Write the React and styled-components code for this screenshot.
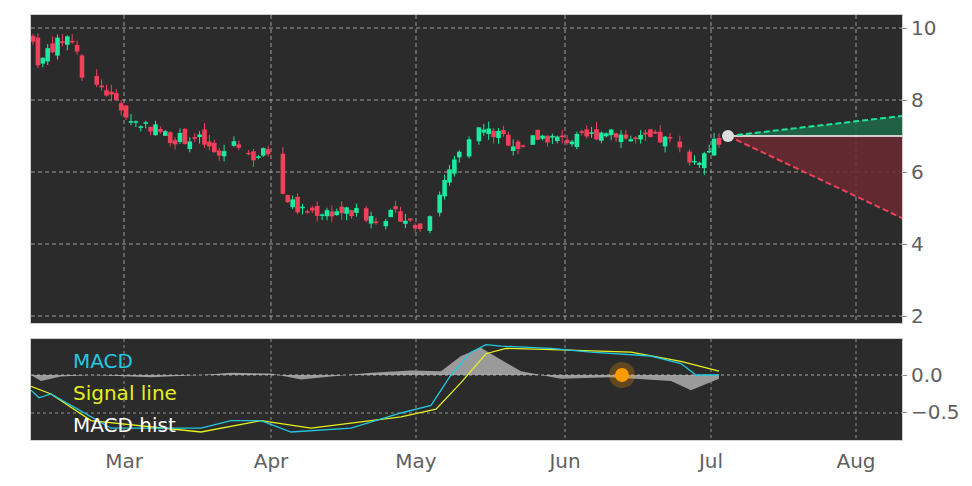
import React from "react";
import styled, { createGlobalStyle } from "styled-components";

const Global = createGlobalStyle`
  body { margin: 0; background: #fff; font-family: "DejaVu Sans", sans-serif; }
`;
const Page = styled.div`
  width: 972px; height: 486px; padding: 14px 0 0 30px; box-sizing: border-box;
  display: flex; flex-direction: column;
`;
const Row = styled.div`
  display: flex; align-items: stretch; margin-top: ${p => p.$mt || 0}px;
`;
const Panel = styled.div`
  position: relative; width: 871px; height: ${p => p.$h}px;
  background: #2b2b2b; border: 1px solid #cfcfcf; flex: none;
  svg { display: block; position: absolute; left: 0; top: 0; }
`;
const YAxis = styled.div`
  position: relative; width: 70px; height: ${p => p.$h}px;
`;
const YLabel = styled.span`
  position: absolute; left: 8px; top: ${p => p.$y}px; transform: translateY(-50%);
  font-size: 20px; color: #5f5f5f; white-space: nowrap;
  &::before { content: ""; position: absolute; left: -8px; top: 50%; width: 4px; border-top: 1px solid #888; }
`;
const XAxis = styled.div`
  position: relative; width: 871px; height: 40px;
`;
const XLabel = styled.span`
  position: absolute; left: ${p => p.$x}px; top: 8px; transform: translateX(-50%);
  font-size: 20px; color: #5f5f5f;
`;
const Legend = styled.div`
  position: absolute; left: 42px; top: 6px; display: flex; flex-direction: column; gap: 0;
  font-size: 20px; line-height: 32px;
`;
const LegendItem = styled.span` color: ${p => p.$c}; `;

const W = 871;
const gridX = [93, 240, 385, 534, 680, 825];
let seed = 7;
const rnd = () => { seed = (seed * 9301 + 49297) % 233280; return seed / 233280; };
const interp = (pts, x) => {
  for (let i = 1; i < pts.length; i++) if (x <= pts[i][0]) {
    const [x0, y0] = pts[i - 1], [x1, y1] = pts[i];
    return y0 + (y1 - y0) * (x - x0) / (x1 - x0);
  }
  return pts[pts.length - 1][1];
};
const path = [[2,9.6],[9,8.9],[17,9.4],[39,9.8],[47,9.3],[53,8.2],[69,8.4],[89,7.8],[101,7.4],[119,7.3],[139,6.95],[169,6.9],[187,6.4],[204,6.9],[221,6.4],[239,6.6],[252,5.4],[269,4.9],[289,4.9],[314,4.9],[339,4.75],[369,4.8],[389,4.4],[403,5.1],[415,5.8],[429,6.5],[449,7.2],[469,7.0],[489,6.7],[509,7.0],[529,6.9],[549,6.9],[579,7.2],[599,6.9],[629,6.9],[649,6.8],[659,6.2],[674,6.5],[690,6.95]];
const py = v => 13 + (10 - v) * 36;
const candles = [];
let prev = 9.9;
for (let x = 2; x <= 690; x += 4.9) {
  if (rnd() < 0.12) continue;
  const c = interp(path, x) + (rnd() - 0.5) * 0.35;
  const o = prev + (rnd() - 0.5) * 0.3;
  const hi = Math.max(o, c) + rnd() * 0.2, lo = Math.min(o, c) - rnd() * 0.2;
  candles.push({ x, o, c, hi, lo });
  prev = c;
}
const mx = (pts) => pts.map(([x, v]) => `${x},${36 + -v * 76}`).join(" ");
const macd = [[0,-0.2],[8,-0.3],[20,-0.25],[40,-0.4],[80,-0.7],[170,-0.7],[200,-0.6],[230,-0.6],[260,-0.75],[320,-0.7],[370,-0.5],[400,-0.4],[420,0],[440,0.3],[455,0.4],[470,0.38],[520,0.35],[560,0.3],[620,0.25],[650,0.15],[665,0],[688,0]];
const signal = [[0,-0.15],[20,-0.25],[60,-0.6],[170,-0.75],[230,-0.6],[280,-0.7],[370,-0.55],[405,-0.45],[430,-0.1],[455,0.28],[475,0.35],[530,0.33],[600,0.3],[650,0.18],[688,0.05]];
const hist = [[0,0],[10,-0.08],[30,-0.02],[60,0.0],[120,-0.03],[170,0],[200,0.03],[240,0.02],[270,-0.06],[300,-0.02],[340,0.03],[380,0.06],[410,0.05],[430,0.25],[450,0.36],[470,0.2],[490,0.05],[530,-0.05],[580,-0.03],[640,-0.08],[660,-0.2],[688,-0.05],[688,0]];

export default function App() {
  return (
    <Page>
      <Global />
      <Row>
        <Panel $h={308}>
          <svg width={W} height={308}>
            {gridX.map(x => <line key={x} x1={x} x2={x} y1={0} y2={308} stroke="#bbb" strokeDasharray="4 3" strokeWidth="0.8" />)}
            {[10, 8, 6, 4, 2].map(v => <line key={v} x1={0} x2={W} y1={py(v)} y2={py(v)} stroke="#bbb" strokeDasharray="4 3" strokeWidth="0.8" />)}
            {candles.map((k, i) => {
              const col = k.c >= k.o ? "#1de9a0" : "#f0405a";
              const top = py(Math.max(k.o, k.c)), bot = py(Math.min(k.o, k.c));
              return <g key={i}>
                <line x1={k.x} x2={k.x} y1={py(k.hi)} y2={py(k.lo)} stroke={col} strokeWidth="1" />
                <rect x={k.x - 2.3} y={top} width={4.6} height={Math.max(bot - top, 1.5)} fill={col} />
              </g>;
            })}
            <polygon points="697,121 871,101 871,121" fill="#1f6b4a" opacity="0.85" />
            <polygon points="697,121 871,121 871,203" fill="#6b2a33" opacity="0.85" />
            <line x1={697} x2={871} y1={121} y2={121} stroke="#fff" strokeWidth="1.6" />
            <line x1={697} x2={871} y1={121} y2={101} stroke="#22e39a" strokeWidth="2" strokeDasharray="6 3" />
            <line x1={697} x2={871} y1={121} y2={203} stroke="#f0405a" strokeWidth="2" strokeDasharray="6 3" />
            <circle cx={697} cy={121} r={6} fill="#ddd" />
          </svg>
        </Panel>
        <YAxis $h={308}>
          {[10, 8, 6, 4, 2].map(v => <YLabel key={v} $y={py(v) + 1}>{v}</YLabel>)}
        </YAxis>
      </Row>
      <Row $mt={14}>
        <Panel $h={101}>
          <svg width={W} height={101}>
            {gridX.map(x => <line key={x} x1={x} x2={x} y1={0} y2={101} stroke="#bbb" strokeDasharray="3 3" strokeWidth="0.7" />)}
            <line x1={0} x2={W} y1={74} y2={74} stroke="#bbb" strokeDasharray="3 3" strokeWidth="0.7" />
            <polygon points={mx(hist)} fill="#9a9a9a" />
            <line x1={0} x2={W} y1={36} y2={36} stroke="#ccc" strokeDasharray="3 3" strokeWidth="0.8" />
            <polyline points={mx(signal)} fill="none" stroke="#e6f01e" strokeWidth="1.3" />
            <polyline points={mx(macd)} fill="none" stroke="#22c8e0" strokeWidth="1.3" />
            <circle cx={591} cy={36} r={13} fill="#ff9a00" opacity="0.25" />
            <circle cx={591} cy={36} r={7} fill="#ff9a00" />
          </svg>
          <Legend>
            <LegendItem $c="#22c8e0">MACD</LegendItem>
            <LegendItem $c="#e6f01e">Signal line</LegendItem>
            <LegendItem $c="#fff">MACD hist</LegendItem>
          </Legend>
        </Panel>
        <YAxis $h={101}>
          <YLabel $y={37}>0.0</YLabel>
          <YLabel $y={74}>−0.5</YLabel>
        </YAxis>
      </Row>
      <XAxis>
        {[["Mar",94],["Apr",241],["May",386],["Jun",535],["Jul",681],["Aug",826]].map(([t, x]) => <XLabel key={t} $x={x}>{t}</XLabel>)}
      </XAxis>
    </Page>
  );
}
